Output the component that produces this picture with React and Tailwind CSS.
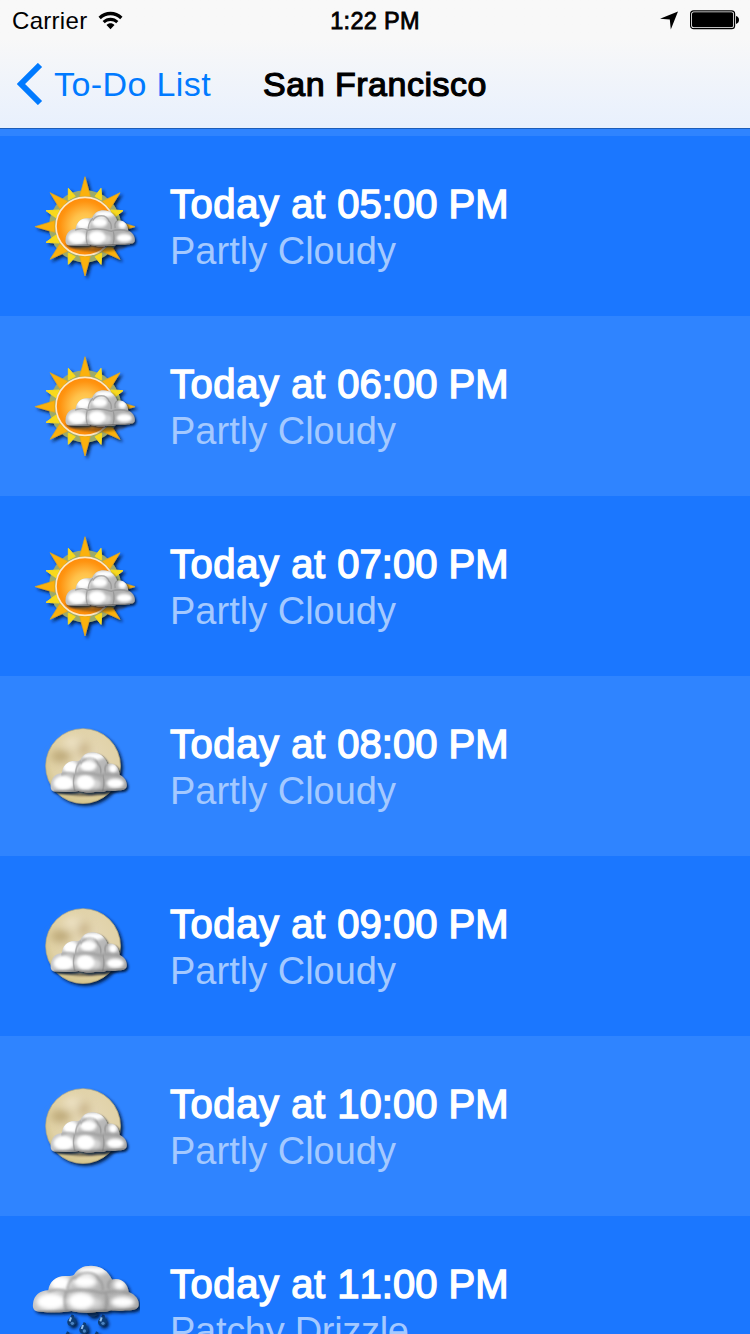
import React from "react";

const hours = [
  { time: "05:00", text: "Partly Cloudy", icon: "sun" },
  { time: "06:00", text: "Partly Cloudy", icon: "sun" },
  { time: "07:00", text: "Partly Cloudy", icon: "sun" },
  { time: "08:00", text: "Partly Cloudy", icon: "moon" },
  { time: "09:00", text: "Partly Cloudy", icon: "moon" },
  { time: "10:00", text: "Partly Cloudy", icon: "moon" },
  { time: "11:00", text: "Patchy Drizzle", icon: "drizzle" },
];

const cloudOutline =
  "M24 180C26 153 46 140 70 139C73 113 94 95 124 96C134 97 140 96 147 92C157 75 174 65 198 65C228 66 250 81 261 107C286 99 309 117 311 145C333 152 343 170 341 184C339 198 322 199 300 199C286 203 270 200 258 199C245 206 228 203 214 204C188 209 160 205 139 201C112 206 74 205 46 203C27 203 22 193 24 180Z";

// Gradients, clip paths and filters shared by every weather icon.
function IconDefs() {
  return (
    <svg className="absolute h-0 w-0" aria-hidden="true">
      <defs>
        <radialGradient id="sunFill" cx="0.5" cy="0.5" r="0.5">
          <stop offset="0" stopColor="#ffdc62" />
          <stop offset="0.45" stopColor="#ffc14a" />
          <stop offset="0.85" stopColor="#ff9411" />
          <stop offset="1" stopColor="#ff8c08" />
        </radialGradient>
        <linearGradient id="cloudBase" x1="0" y1="0" x2="1" y2="0.6">
          <stop offset="0" stopColor="#d6d6d6" />
          <stop offset="1" stopColor="#a6a6a6" />
        </linearGradient>
        <radialGradient id="moonFill" cx="0.55" cy="0.4" r="0.6">
          <stop offset="0" stopColor="#e5d8b8" />
          <stop offset="0.8" stopColor="#e0d1a5" />
          <stop offset="1" stopColor="#d4c48c" />
        </radialGradient>
        <clipPath id="cloudClip"><path d={cloudOutline} /></clipPath>
        <filter id="shadow" x="-20%" y="-20%" width="150%" height="150%">
          <feDropShadow dx="7" dy="7" stdDeviation="4" floodColor="#001437" floodOpacity="0.9" />
        </filter>
        <filter id="soft" x="-20%" y="-50%" width="140%" height="200%">
          <feGaussianBlur stdDeviation="3" />
        </filter>
        <filter id="puffBlur" x="-40%" y="-40%" width="180%" height="180%">
          <feGaussianBlur stdDeviation="6" />
        </filter>
        <filter id="smudge" x="-80%" y="-80%" width="260%" height="260%">
          <feGaussianBlur stdDeviation="13" />
        </filter>
      </defs>
    </svg>
  );
}

function Cloud() {
  return (
    <g filter="url(#shadow)">
      <path d={cloudOutline} fill="url(#cloudBase)" />
      <g clipPath="url(#cloudClip)">
        <g fill="#ffffff" filter="url(#puffBlur)">
          <ellipse cx="105" cy="117" rx="31" ry="22" />
          <ellipse cx="203" cy="80" rx="45" ry="12" />
          <ellipse cx="180" cy="113" rx="35" ry="18" />
          <ellipse cx="284" cy="122" rx="18" ry="16" />
          <ellipse cx="78" cy="173" rx="43" ry="25" />
          <ellipse cx="168" cy="171" rx="39" ry="26" />
          <ellipse cx="293" cy="174" rx="36" ry="17" />
          <ellipse cx="212" cy="177" rx="22" ry="16" opacity="0.45" />
        </g>
        <g fill="none" stroke="#8d8d8d" strokeWidth="6" strokeLinecap="round" opacity="0.65" filter="url(#soft)">
          <path d="M150 104C165 82 210 78 223 108Q235 116 233 137" />
          <path d="M70 142Q100 132 125 143Q174 132 233 147Q272 137 314 147" />
          <path d="M123 145Q113 172 126 204M243 150Q250 175 240 203" />
          <path d="M128 135Q130 111 148 98M251 133Q246 116 260 107" />
        </g>
        <path d="M36 205Q86 203 133 202Q187 207 239 201Q286 202 338 196" fill="none" stroke="#5d5d5d" strokeWidth="7" opacity="0.65" filter="url(#soft)" />
      </g>
    </g>
  );
}

function SunIcon() {
  return (
    <svg viewBox="0 0 375 375" className="h-[125px] w-[125px] shrink-0">
      <g filter="url(#shadow)">
        <circle cx="180" cy="184" r="108" fill="#9daa6b" />
        <path d="M130 70L151 94L130 105ZM228 70L230 105L210 94ZM294 137L267 158L257 135ZM294 232L257 234L267 210ZM228 298L210 275L230 264ZM130 298L130 264L151 275ZM63 232L93 210L103 234ZM63 137L103 135L93 158Z" fill="#f8d91b" stroke="#f8d91b" strokeWidth="3" />
        <path d="M180 35L196 94L164 94ZM285 83L255 132L232 109ZM330 185L271 202L271 167ZM285 283L232 259L255 236ZM180 333L164 274L196 274ZM75 283L105 236L128 259ZM30 185L89 167L89 202ZM75 83L128 109L105 132Z" fill="#fbb10a" stroke="#e5a818" strokeWidth="2" />
      </g>
      <circle cx="180" cy="184" r="87" fill="url(#sunFill)" stroke="#ffe7c4" strokeWidth="5" />
      <path d="M122 236Q210 261 309 238L295 252Q211 270 151 253Z" fill="#462b10" opacity="0.5" filter="url(#soft)" />
      <g transform="translate(106 86) scale(.655 .765)"><Cloud /></g>
    </svg>
  );
}

function MoonIcon() {
  return (
    <svg viewBox="0 0 375 375" className="h-[125px] w-[125px] shrink-0">
      <g filter="url(#shadow)">
        <circle cx="174" cy="183" r="112" fill="url(#moonFill)" stroke="#b9ae7e" strokeWidth="2" />
      </g>
      <g filter="url(#smudge)" opacity="0.6">
        <ellipse cx="107" cy="154" rx="30" ry="18" fill="#a38a54" />
        <ellipse cx="177" cy="133" rx="17" ry="22" fill="#b69c6c" />
        <ellipse cx="140" cy="112" rx="26" ry="14" fill="#f6edd8" />
      </g>
      <path d="M90 254Q177 277 282 252L263 265Q178 282 105 263Z" fill="#322b1d" opacity="0.6" filter="url(#soft)" />
      <g transform="translate(60 86) scale(.719 .855)"><Cloud /></g>
    </svg>
  );
}

function DrizzleIcon() {
  return (
    <svg viewBox="0 0 345 375" className="-mt-px h-[125px] w-[115px] shrink-0">
      <g filter="url(#shadow)">
        {[[139, 211], [231, 211], [175, 234], [125, 262], [212, 262]].map(([x, y]) => (
          <g key={`${x}-${y}`} transform={`translate(${x} ${y})`}>
            <path d="M1 0C-2 11-13 15-12 25C-11 39 12 40 14 24C15 17 10 16 8 3Z" fill="#103d75" />
            <path d="M-1 9L-5 21" stroke="#91bfee" strokeWidth="6" />
            <circle cx="3" cy="27" r="5" fill="#4b83c0" />
          </g>
        ))}
        <ellipse cx="203" cy="208" rx="16" ry="10" fill="#173f73" />
      </g>
      <Cloud />
    </svg>
  );
}

const icons = { sun: SunIcon, moon: MoonIcon, drizzle: DrizzleIcon };

function StatusBar() {
  return (
    <div className="grid h-10 grid-cols-3 items-center px-3 pt-[2px] text-black">
      <div className="flex items-center gap-[11px]">
        <span className="text-[24px] leading-[38px] tracking-[0.3px]">Carrier</span>
        <svg viewBox="0 0 25 19" className="-mt-0.5 h-[19px] w-[25px]">
          <path d="M0.5 5.8C7-.8 18-.8 24.5 5.8L22.2 8.2C17 3 8 3 2.8 8.2ZM4.6 10C9 5.5 16 5.5 20.4 10L18.2 12.3C15 9.2 10 9.2 6.8 12.3ZM8.5 14C10.6 11.7 14.4 11.7 16.5 14L12.5 18.3Z" />
        </svg>
      </div>
      <span className="text-center text-[23.5px] leading-[38px] tracking-[0.3px] whitespace-nowrap [-webkit-text-stroke:0.8px_black]">1:22 PM</span>
      <div className="-mt-0.5 flex items-center justify-end gap-3">
        <svg viewBox="0 0 18 19" className="h-[19px] w-[18px]"><path d="M18 .4L10.8 18.5L9.8 8.6L0 7.8Z" /></svg>
        <svg viewBox="0 0 49 20" className="-mr-px h-5 w-[49px]">
          <rect x=".6" y=".9" width="44" height="17.8" rx="3" fill="white" stroke="black" strokeWidth="1.2" />
          <rect x="2" y="2.3" width="41.2" height="15" rx="1.7" />
          <path d="M46 6Q49 7 49 9.8Q49 13 46 14Z" />
        </svg>
      </div>
    </div>
  );
}

function Header() {
  return (
    <header className="h-[129px] shrink-0 border-b border-[#1d5db9] bg-linear-to-b from-[#f8f8f8] from-30% to-[#e8f0fd]">
      <StatusBar />
      <div className="grid h-[88px] grid-cols-[1fr_auto_1fr] items-center">
        <div className="flex items-center gap-[11px] pl-[17px] text-[#007aff]">
          <svg viewBox="0 0 26 42" className="h-[42px] w-[26px]">
            <path d="M23 2L4 21L23 40" fill="none" stroke="currentColor" strokeWidth="6" />
          </svg>
          <span className="text-[34px] leading-[40px] tracking-[0.4px] whitespace-nowrap">To-Do List</span>
        </div>
        <h1 className="text-[34px] leading-[40px] tracking-[0.5px] whitespace-nowrap text-black [-webkit-text-stroke:1.2px_black]">San Francisco</h1>
        <div />
      </div>
    </header>
  );
}

function HourRow({ hour }) {
  const Icon = icons[hour.icon];
  return (
    <li className="flex h-[180px] shrink-0 items-start pl-[25px] odd:bg-[#1b77ff] even:bg-[#2f84ff]">
      <div className="flex w-[145px] shrink-0 pt-[29px]"><Icon /></div>
      <div className="flex flex-col pt-[45px] whitespace-nowrap">
        <p className="text-[40px] leading-[46px] tracking-[0.55px] text-white [-webkit-text-stroke:1.4px_white]">
          Today at <span className="tracking-normal [font-kerning:none]">{hour.time} PM</span>
        </p>
        <p className={`text-[38px] leading-[48px] text-[#a4c9ff] ${hour.icon === "drizzle" ? "tracking-[-0.3px]" : ""}`}>{hour.text}</p>
      </div>
    </li>
  );
}

export default function App() {
  return (
    <main className="flex h-[1334px] w-[750px] flex-col overflow-hidden bg-[#2f84ff] font-['Liberation_Sans',Arial,sans-serif]">
      <IconDefs />
      <Header />
      <ul className="mt-[7px] flex flex-col">
        {hours.map((hour) => <HourRow key={hour.time} hour={hour} />)}
      </ul>
    </main>
  );
}
